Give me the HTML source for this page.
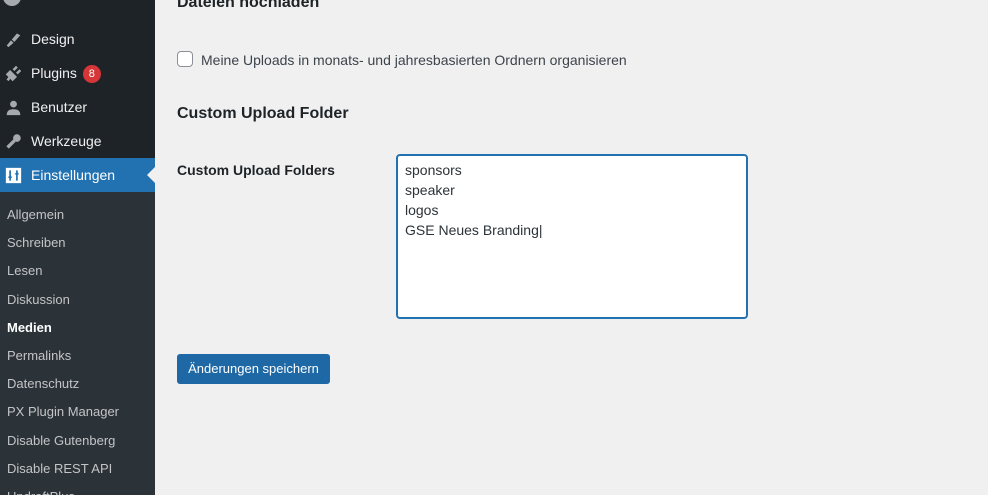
<!DOCTYPE html>
<html><head><style>
*{margin:0;padding:0;box-sizing:border-box}
html,body{width:988px;height:495px;overflow:hidden}
body{background:#f0f0f1;font-family:"Liberation Sans",sans-serif;color:#1d2327;position:relative}
#side{position:absolute;left:0;top:0;width:155px;height:495px;background:#1d2327;overflow:hidden}
.mi{position:absolute;left:0;width:155px;height:34px;color:#f0f0f1;font-size:14px;line-height:34px;padding-left:31px}
.ic{position:absolute;left:5px;top:9px;width:17px;height:17px}
.sub{position:absolute;left:0;top:192px;width:155px;height:303px;background:#2c3338;overflow:hidden}
.si{position:absolute;left:7px;font-size:13px;color:#c3c4c7}
.h{position:absolute;font-weight:bold;font-size:16px}
</style></head><body>
<div id="side">
<div style="position:absolute;left:3px;top:-12px;width:18px;height:18px;border-radius:50%;background:#a7aaad"></div>
<div class="mi" style="top:22px"><svg class="ic" viewBox="0 0 20 20"><path d="M2 17l5-6 3 3-6 5z M8 10l6-7 4 2-7 8z" fill="#a7aaad"/></svg>Design</div>
<div class="mi" style="top:56px"><svg class="ic" viewBox="0 0 20 20"><path d="M3 18l3-4 M6 8l6 6-3 3-6-6z M10 6l4-4 M14 10l4-4" stroke="#a7aaad" stroke-width="3" fill="#a7aaad"/></svg>Plugins <span style="display:inline-block;background:#d63638;color:#fff;border-radius:9px;width:18px;height:18px;font-size:11px;line-height:18px;text-align:center;vertical-align:middle;margin-left:2px">8</span></div>
<div class="mi" style="top:90px"><svg class="ic" viewBox="0 0 20 20"><circle cx="10" cy="6" r="4" fill="#a7aaad"/><path d="M2 19c0-6 4-7 8-7s8 1 8 7z" fill="#a7aaad"/></svg>Benutzer</div>
<div class="mi" style="top:124px"><svg class="ic" viewBox="0 0 20 20"><path d="M3 17l8-8" stroke="#a7aaad" stroke-width="4"/><circle cx="14" cy="6" r="4.5" fill="#a7aaad"/></svg>Werkzeuge</div>
<div class="mi" style="top:158px;background:#2271b1;color:#fff"><svg class="ic" viewBox="0 0 20 20"><rect x="1" y="1" width="18" height="18" fill="#fff"/><path d="M6 4v12M4 12h4M14 4v12M12 8h4" stroke="#2271b1" stroke-width="2"/></svg>Einstellungen</div>
<div style="position:absolute;left:147px;top:167px;border-right:8px solid #f0f0f1;border-top:8px solid transparent;border-bottom:8px solid transparent"></div>
<div class="sub">
<div class="si" style="top:15px">Allgemein</div>
<div class="si" style="top:43px">Schreiben</div>
<div class="si" style="top:71px">Lesen</div>
<div class="si" style="top:100px">Diskussion</div>
<div class="si" style="top:128px;color:#fff;font-weight:bold">Medien</div>
<div class="si" style="top:156px">Permalinks</div>
<div class="si" style="top:184px">Datenschutz</div>
<div class="si" style="top:212px">PX Plugin Manager</div>
<div class="si" style="top:241px">Disable Gutenberg</div>
<div class="si" style="top:269px">Disable REST API</div>
<div class="si" style="top:297px">UpdraftPlus</div>
</div>
</div>
<div class="h" style="left:177px;top:-6px">Dateien hochladen</div>
<div style="position:absolute;left:177px;top:51px;width:16px;height:16px;border:1px solid #8c8f94;border-radius:4px;background:#fff"></div>
<div style="position:absolute;left:201px;top:52px;font-size:14px;color:#3c434a">Meine Uploads in monats- und jahresbasierten Ordnern organisieren</div>
<div class="h" style="left:177px;top:105px">Custom Upload Folder</div>
<div style="position:absolute;left:177px;top:162px;font-size:14px;font-weight:bold">Custom Upload Folders</div>
<div style="position:absolute;left:396px;top:154px;width:352px;height:165px;background:#fff;border:2px solid #2271b1;border-radius:4px;padding:4px 7px;font-size:14px;line-height:20px;color:#2c3338">sponsors<br>speaker<br>logos<br>GSE Neues Branding|</div>
<div style="position:absolute;left:177px;top:354px;width:153px;height:30px;background:#1e68a5;border-radius:3px;color:#fff;font-size:13px;line-height:30px;text-align:center">Änderungen speichern</div>
</body></html>
